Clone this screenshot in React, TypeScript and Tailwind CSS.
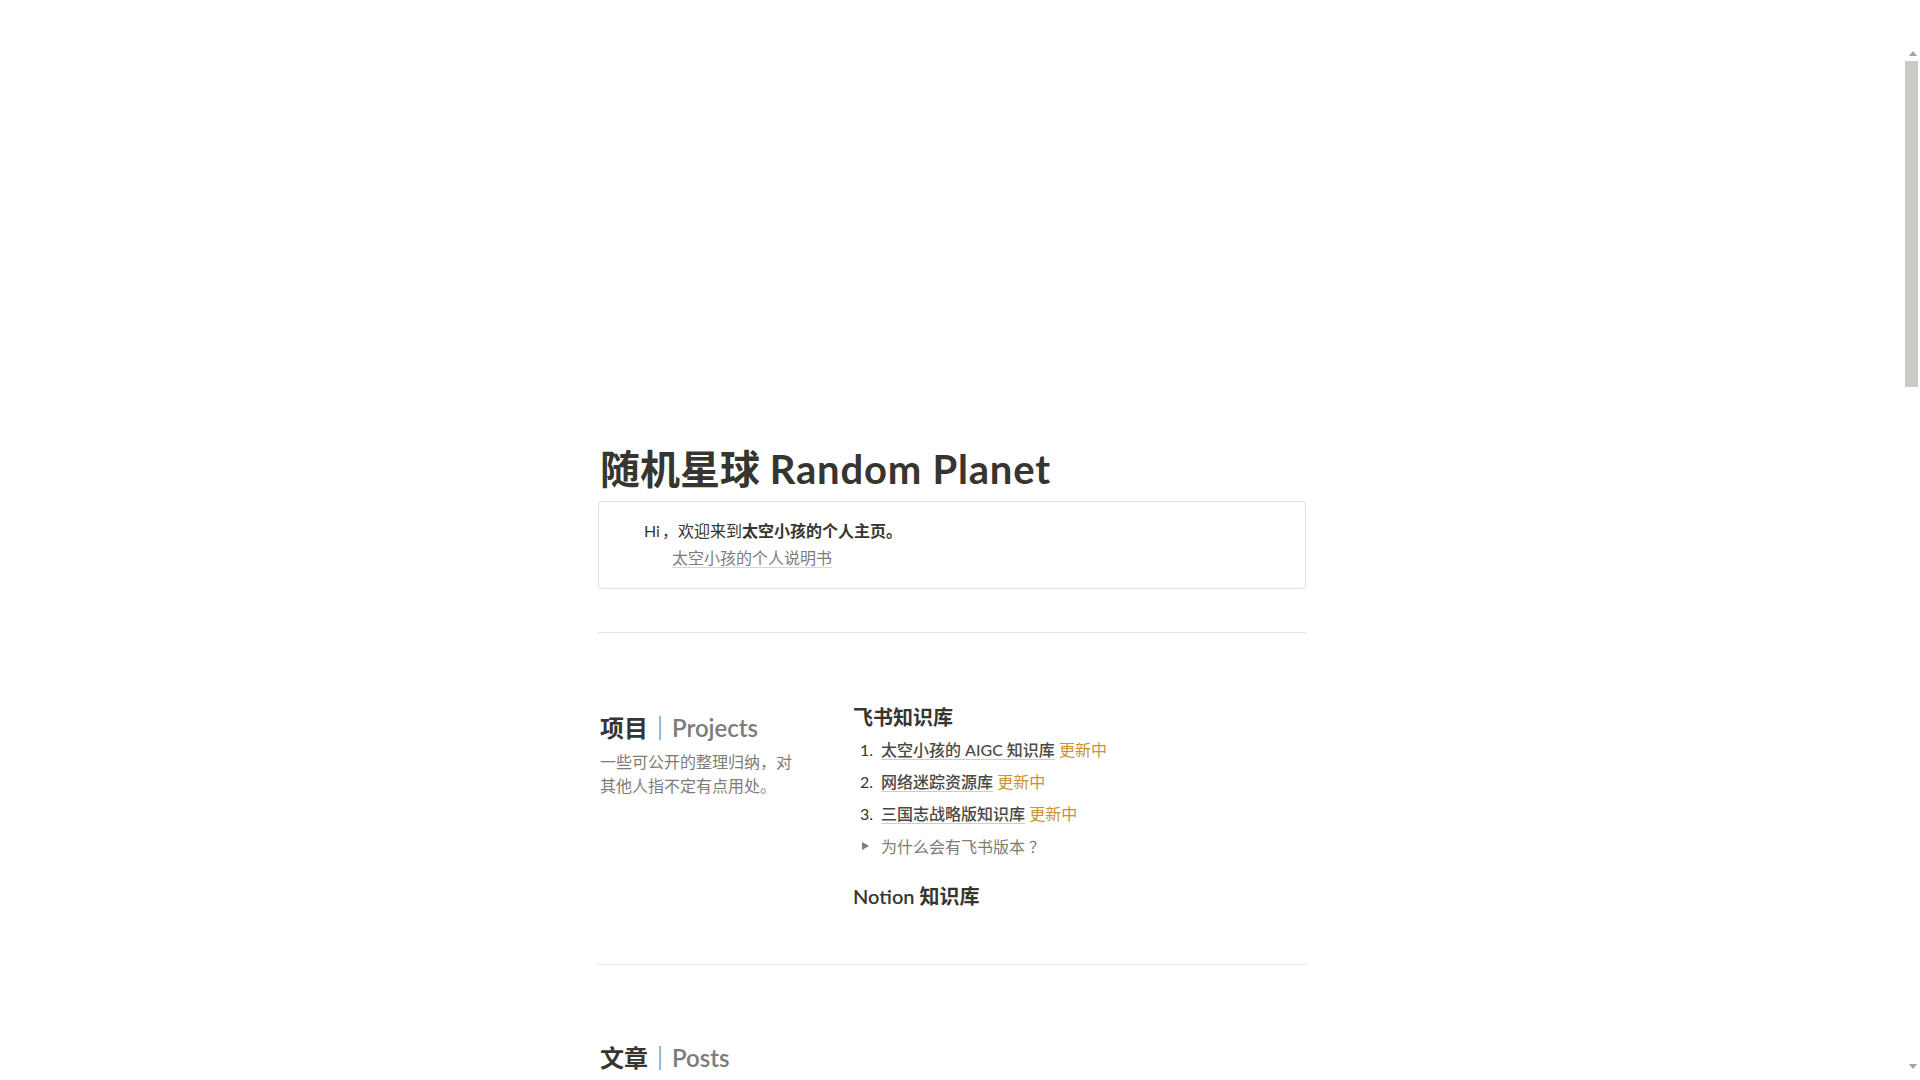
const font = "font-['Lato','Noto_Sans_CJK_SC',sans-serif]";
const cjk = "font-['Noto_Sans_CJK_SC',sans-serif]";

type Item = { title: string; status: string };

const feishuItems: Item[] = [
  { title: '太空小孩的 AIGC 知识库', status: '更新中' },
  { title: '网络迷踪资源库', status: '更新中' },
  { title: '三国志战略版知识库', status: '更新中' },
];

const PageLink = ({ children }: { children: React.ReactNode }) => (
  <span className="border-b border-[rgba(55,53,47,0.25)] font-medium text-[#4a4945]">
    {children}
  </span>
);

const SectionHeading = ({ zh, en }: { zh: string; en: string }) => (
  <h2 className="h-[32px] px-[2px] text-[24px] leading-[32px] whitespace-nowrap">
    <span className="font-bold text-[#37352f]">{zh}</span>
    <span className="font-semibold text-[#7d7c78]">｜{en}</span>
  </h2>
);

const Divider = ({ className }: { className: string }) => (
  <div className={`h-px w-full bg-[#e3e2df] ${className}`} />
);

const Scrollbar = () => (
  <div className="flex h-full w-[16px] shrink-0 flex-col bg-white">
    <div className="flex h-[61px] items-end justify-center pb-[5px] pl-[1px]">
      <svg width="8" height="5" viewBox="0 0 8 5">
        <polygon points="4,0 8,5 0,5" fill="#a3a3a0" />
      </svg>
    </div>
    <div className="ml-[1px] h-[326px] w-[13px] bg-[#c9c9c6]" />
    <div className="flex-1" />
    <div className="flex h-[16px] items-start justify-center pl-[1px]">
      <svg width="8" height="5" viewBox="0 0 8 5">
        <polygon points="0,0 8,0 4,5" fill="#a3a3a0" />
      </svg>
    </div>
  </div>
);

export default function App() {
  return (
    <div className={`flex h-screen w-full overflow-hidden bg-white ${font}`}>
      <main className="flex flex-1 justify-center overflow-hidden">
        <div className="w-[708px] pt-[445px] text-[16px] text-[#37352f]">
          <h1 className="h-[48px] px-[2px] text-[40px] leading-[48px] font-bold whitespace-nowrap">
            随机星球 <span className="tracking-[0.02em]">Random Planet</span>
          </h1>

          <div className="mt-[8px] h-[88px] rounded-[4px] border border-[#e0dfdc] pt-[16px] pl-[45px]">
            <p className="h-[24px] leading-[24px]">
              Hi<span className={`${cjk} pl-[2px]`}>，</span>欢迎来到
              <span className="font-bold">太空小孩的个人主页。</span>
            </p>
            <p className="mt-[4px] h-[24px] pl-[28px] leading-[24px]">
              <span className="border-b border-[rgba(55,53,47,0.2)] text-[#7d7c78]">
                太空小孩的个人说明书
              </span>
            </p>
          </div>

          <Divider className="mt-[43px]" />

          <div className="flex items-start">
            <div className="w-[209px] shrink-0 pt-[79px]">
              <SectionHeading zh="项目" en="Projects" />
              <p className="mt-[6px] px-[2px] leading-[24px] text-[#7d7c78]">
                一些可公开的整理归纳，对其他人指不定有点用处。
              </p>
            </div>

            <div className="ml-[46px] flex-1 pt-[70px]">
              <h3 className="h-[28px] text-[20px] leading-[28px] font-bold">飞书知识库</h3>
              <ol className="mt-[3px]">
                {feishuItems.map((item, i) => (
                  <li key={item.title} className="flex h-[32px] items-center pl-[7px] leading-[24px]">
                    <span className="w-[21px] shrink-0">{i + 1}.</span>
                    <span>
                      <PageLink>{item.title}</PageLink>{' '}
                      <span className="text-[#cb912f]">{item.status}</span>
                    </span>
                  </li>
                ))}
                <li className="flex h-[32px] items-center pl-[9px] leading-[24px] text-[#7d7c78]">
                  <span className="flex w-[19px] shrink-0 items-center">
                    <svg width="7" height="8" viewBox="0 0 7 8">
                      <polygon points="0,0 7,4 0,8" fill="#7d7c78" />
                    </svg>
                  </span>
                  <span className={cjk}>
                    为什么会有飞书版本<span className="pl-[4px]">？</span>
                  </span>
                </li>
              </ol>

              <h3 className="mt-[20px] h-[28px] text-[20px] leading-[28px] font-semibold whitespace-nowrap">
                Notion 知识库
              </h3>
            </div>
          </div>

          <Divider className="mt-[54px]" />

          <div className="pt-[77px]">
            <SectionHeading zh="文章" en="Posts" />
          </div>
        </div>
      </main>
      <Scrollbar />
    </div>
  );
}
